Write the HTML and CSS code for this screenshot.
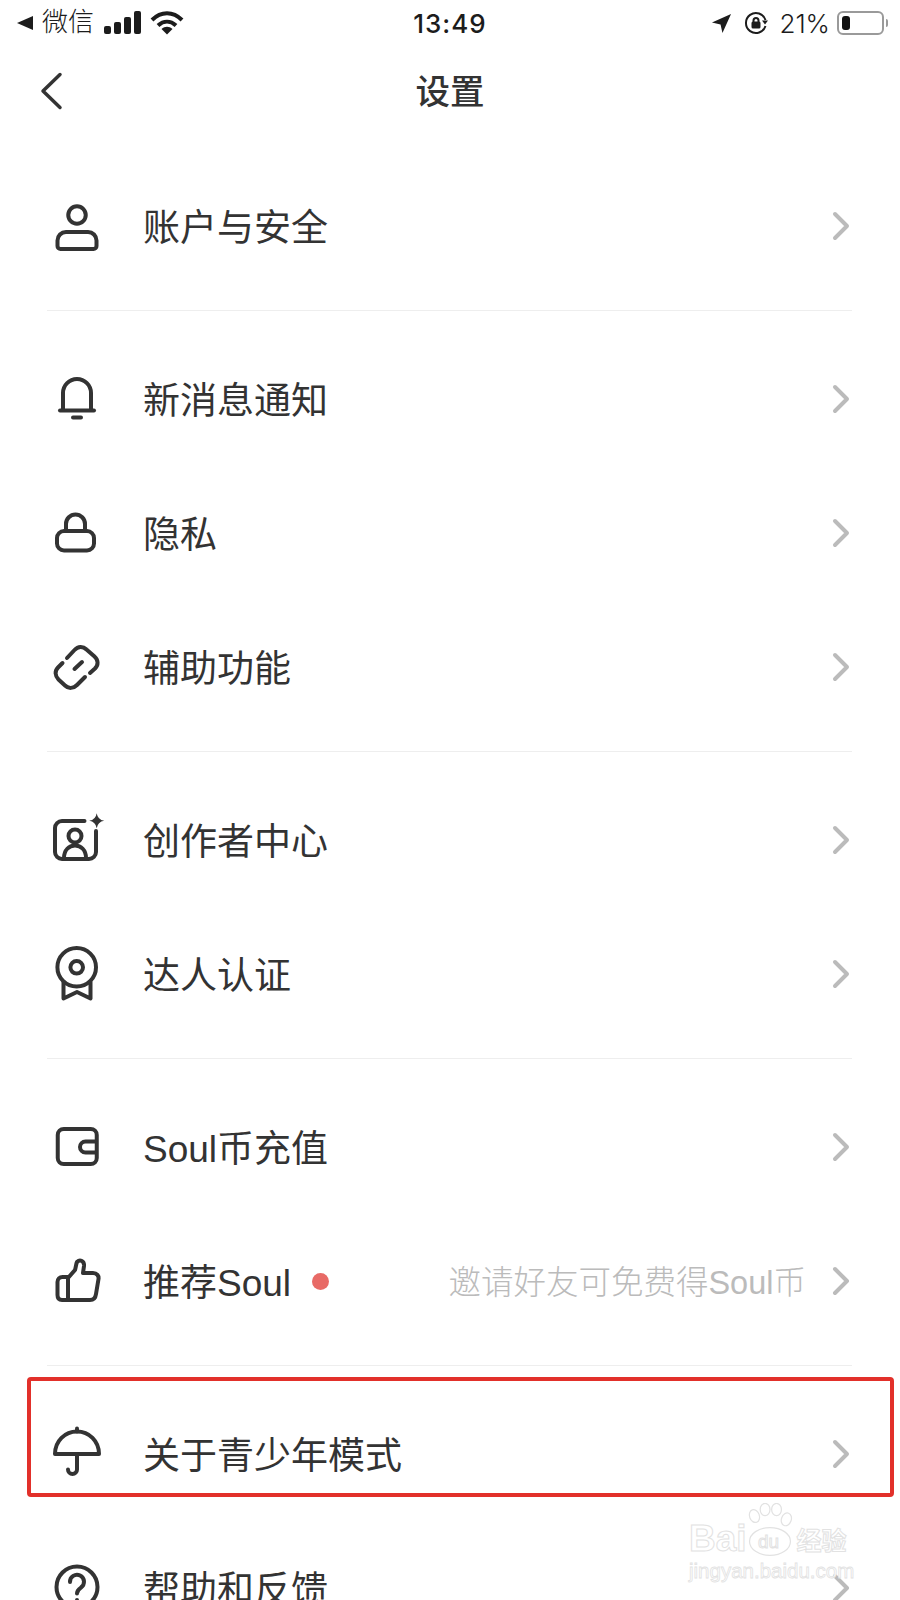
FILE: index.html
```html
<!DOCTYPE html>
<html lang="zh-CN">
<head>
  <meta charset="UTF-8">
  <meta name="viewport" content="width=device-width, initial-scale=1.0">
  <title>设置</title>
  <link rel="stylesheet" href="styles.css">
</head>
<body>
  <!-- Status bar -->
  <div class="status-bar">
    <div class="status-left">
      <svg class="status-back" viewBox="0 0 18 16"><path d="M1 8L17 1V15Z"/></svg>
      <span class="status-app">微信</span>
      <svg class="status-signal" viewBox="0 0 38 24">
        <rect x="0" y="15" width="7" height="8" rx="2"/>
        <rect x="10" y="11" width="7" height="12" rx="2"/>
        <rect x="20" y="6" width="7" height="17" rx="2"/>
        <rect x="30" y="0" width="7" height="23" rx="2"/>
      </svg>
      <svg class="status-wifi" viewBox="0 0 34 24">
        <path class="wifi-arc" d="M2 9C11 0 23 0 32 9"/>
        <path class="wifi-arc" d="M8 14.500C13.500 9.500 20.500 9.500 26 14.500"/>
        <path d="M11.500 18C15 15 19 15 22.500 18L17 23.500Z"/>
      </svg>
    </div>
    <div class="status-time">13:49</div>
    <div class="status-right">
      <svg class="status-arrow" viewBox="0 0 22 22"><path d="M21 1L1 10L10 12L12 21Z"/></svg>
      <svg class="status-lock" viewBox="0 0 24 24">
        <path class="lock-ring" d="M21.500 9A10 10 0 1 0 21.500 15"/>
        <path d="M18 9.500H24L21 13.500Z"/>
        <rect x="7.500" y="10.500" width="9" height="7" rx="1.500"/>
        <path class="lock-loop" d="M9.500 11V9.500a2.500 2.500 0 0 1 5 0V11"/>
      </svg>
      <span class="status-battery-text">21%</span>
      <div class="battery"><div class="battery-level"></div></div>
      <div class="battery-nub"></div>
    </div>
  </div>

  <!-- Nav -->
  <div class="nav">
    <svg class="nav-back" viewBox="0 0 24 38"><path d="M21 2.500L4 19L21 35.500"/></svg>
    <h1 class="nav-title">设置</h1>
  </div>

  <!-- Settings list -->
  <div class="group">
    <div class="row">
      <svg class="row-icon" viewBox="0 0 50 50">
        <circle cx="25" cy="14" r="8.750"/>
        <path d="M14 31H36a8.500 8.500 0 0 1 8.500 8.500V45a3 3 0 0 1-3 3H8.500a3 3 0 0 1-3-3V39.500A8.500 8.500 0 0 1 14 31Z"/>
      </svg>
      <span class="row-label">账户与安全</span>
      <svg class="row-arrow" viewBox="0 0 20 30"><path d="M4 3L16 15L4 27"/></svg>
    </div>
  </div>

  <div class="group">
    <div class="row">
      <svg class="row-icon" viewBox="0 0 50 50">
        <path d="M11 36V19a14 14 0 0 1 28 0V36"/>
        <path d="M8 36.500H42"/>
        <path d="M21 43.500H29"/>
      </svg>
      <span class="row-label">新消息通知</span>
      <svg class="row-arrow" viewBox="0 0 20 30"><path d="M4 3L16 15L4 27"/></svg>
    </div>
    <div class="row">
      <svg class="row-icon" viewBox="0 0 50 50">
        <path d="M14 23V16a9.500 9.500 0 0 1 19 0V23"/>
        <rect x="5" y="23" width="37" height="19.500" rx="7"/>
      </svg>
      <span class="row-label">隐私</span>
      <svg class="row-arrow" viewBox="0 0 20 30"><path d="M4 3L16 15L4 27"/></svg>
    </div>
    <div class="row">
      <svg class="row-icon" viewBox="0 0 50 50">
        <path d="M15 16L22.500 8C26 4 31 4 34.500 7.500L42.500 14.500C46.500 18 46.500 23 43 26.500L38 31"/>
        <path d="M10.500 21L6 25.500C2.500 29 3 34 6.500 37.500L13 43.500C16.500 47 21.500 46.500 25 43L33 35"/>
        <path d="M22.500 27L30 20"/>
      </svg>
      <span class="row-label">辅助功能</span>
      <svg class="row-arrow" viewBox="0 0 20 30"><path d="M4 3L16 15L4 27"/></svg>
    </div>
  </div>

  <div class="group">
    <div class="row">
      <svg class="row-icon" viewBox="0 0 50 50">
        <path d="M32.500 6H10a7 7 0 0 0-7 7V37a7 7 0 0 0 7 7H37a7 7 0 0 0 7-7V16"/>
        <circle cx="23" cy="21" r="6.500"/>
        <path d="M12 43C12 35 17 30.500 23 30.500S34 35 34 43"/>
        <path class="icon-fill" d="M44.700-1.800Q45.700 4.700 52.200 5.700Q45.700 6.700 44.700 13.200Q43.700 6.700 37.200 5.700Q43.700 4.700 44.700-1.800Z"/>
      </svg>
      <span class="row-label">创作者中心</span>
      <svg class="row-arrow" viewBox="0 0 20 30"><path d="M4 3L16 15L4 27"/></svg>
    </div>
    <div class="row">
      <svg class="row-icon" viewBox="0 0 50 50">
        <circle cx="24.700" cy="18.300" r="19.300"/>
        <circle cx="24.700" cy="18.300" r="6.300"/>
        <path d="M11.500 33V49.500L25 43L38.500 49.500V33"/>
      </svg>
      <span class="row-label">达人认证</span>
      <svg class="row-arrow" viewBox="0 0 20 30"><path d="M4 3L16 15L4 27"/></svg>
    </div>
  </div>

  <div class="group">
    <div class="row">
      <svg class="row-icon" viewBox="0 0 50 50">
        <rect x="5.750" y="7" width="39" height="35" rx="6"/>
        <path d="M44 19.500H33.500a5.500 5.500 0 0 0 0 11H44"/>
      </svg>
      <span class="row-label">Soul币充值</span>
      <svg class="row-arrow" viewBox="0 0 20 30"><path d="M4 3L16 15L4 27"/></svg>
    </div>
    <div class="row">
      <svg class="row-icon" viewBox="0 0 50 50">
        <path d="M16 22L23 14C24 11 24 8 25 6C28 3 32.500 5 32 10L31 17H41C45 17 47 20 46.500 23L44 38C43.500 42 41 44 38 44H10C7 44 5.500 42 5.500 39V26C5.500 23 7.500 21 10.500 21H16V44"/>
      </svg>
      <span class="row-label">推荐Soul</span>
      <span class="row-dot"></span>
      <span class="row-hint">邀请好友可免费得Soul币</span>
      <svg class="row-arrow" viewBox="0 0 20 30"><path d="M4 3L16 15L4 27"/></svg>
    </div>
  </div>

  <div class="group">
    <div class="row row-marked">
      <svg class="row-icon" viewBox="0 0 50 50">
        <path d="M3 25C3 12 13 2.500 25 2.500S47 12 47 25Z"/>
        <path d="M25 -0.500V2.500"/>
        <path d="M25 25V40.500a4.500 4.500 0 0 1-9 0"/>
      </svg>
      <span class="row-label">关于青少年模式</span>
      <svg class="row-arrow" viewBox="0 0 20 30"><path d="M4 3L16 15L4 27"/></svg>
    </div>
    <div class="row">
      <svg class="row-icon" viewBox="0 0 50 50">
        <circle cx="25" cy="24" r="20.500"/>
        <path d="M18 19a7 7 0 1 1 11 5.500c-2.500 1.700-4 2.700-4 6"/>
        <path d="M25 37V37.500"/>
      </svg>
      <span class="row-label">帮助和反馈</span>
      <svg class="row-arrow" viewBox="0 0 20 30"><path d="M4 3L16 15L4 27"/></svg>
    </div>
  </div>

  <!-- Watermark -->
  <div class="watermark">
    <div class="watermark-top">
      <span class="watermark-bai">Bai</span>
      <svg class="watermark-paw" viewBox="0 0 56 66">
        <ellipse cx="9" cy="16" rx="6" ry="8" transform="rotate(-20 9 16)"/>
        <ellipse cx="22" cy="8" rx="6" ry="7.500"/>
        <ellipse cx="36" cy="8" rx="6" ry="7.500"/>
        <ellipse cx="48" cy="20" rx="6" ry="8" transform="rotate(20 48 20)"/>
        <ellipse cx="28" cy="47" rx="25" ry="17"/>
      </svg>
      <span class="watermark-du">du</span>
      <span class="watermark-cn">经验</span>
    </div>
    <div class="watermark-url">jingyan.baidu.com</div>
  </div>
</body>
</html>
```

FILE: styles.css
```css
* {
  margin: 0;
  padding: 0;
  box-sizing: border-box;
}

body {
  position: relative;
  width: 900px;
  height: 1600px;
  overflow: hidden;
  background: #fff;
  color: #333;
  font-family: "Inter", "Noto Sans CJK SC", sans-serif;
}

/* Status bar */
.status-bar {
  display: flex;
  justify-content: space-between;
  align-items: center;
  height: 46px;
  padding: 0 12px 0 16px;
  color: #1c1c1c;
}

.status-left,
.status-right {
  display: flex;
  align-items: center;
  width: 330px;
}

.status-right {
  justify-content: flex-end;
}

.status-back {
  width: 18px;
  height: 16px;
  fill: #1c1c1c;
}

.status-app {
  margin-left: 8px;
  font-size: 26px;
  font-weight: 300;
  line-height: 36px;
  padding-bottom: 2px;
}

.status-signal {
  width: 38px;
  height: 24px;
  margin-left: 10px;
  fill: #1c1c1c;
}

.status-wifi {
  width: 34px;
  height: 24px;
  margin-left: 8px;
  fill: #1c1c1c;
}

.wifi-arc {
  fill: none;
  stroke: #1c1c1c;
  stroke-width: 4;
}

.status-time {
  font-size: 26px;
  font-weight: 500;
  letter-spacing: 1px;
  margin-right: 4px;
}

.status-arrow {
  width: 21px;
  height: 21px;
  fill: #1c1c1c;
}

.status-lock {
  width: 24px;
  height: 24px;
  margin-left: 12px;
  fill: #1c1c1c;
}

.lock-ring,
.lock-loop {
  fill: none;
  stroke: #1c1c1c;
  stroke-width: 2;
}

.status-battery-text {
  margin-left: 11px;
  font-size: 26px;
  font-weight: 300;
}

.battery {
  width: 47px;
  height: 24px;
  margin-left: 7px;
  padding: 3px;
  border: 2px solid #9a9a9a;
  border-radius: 6px;
}

.battery-level {
  width: 8px;
  height: 100%;
  background: #111;
  border-radius: 3px;
}

.battery-nub {
  width: 2px;
  height: 8px;
  margin-left: 2px;
  background: #9a9a9a;
  border-radius: 0 2px 2px 0;
}

/* Nav */
.nav {
  position: relative;
  display: flex;
  justify-content: center;
  align-items: center;
  height: 92px;
  padding-bottom: 6px;
}

.nav-back {
  position: absolute;
  left: 39px;
  top: 26px;
  width: 24px;
  height: 38px;
  fill: none;
  stroke: #333;
  stroke-width: 3.500;
  stroke-linecap: round;
  stroke-linejoin: round;
}

.nav-title {
  font-size: 34.500px;
  font-weight: 500;
  color: #333;
}

/* List */
.group {
  margin: 0 48px 0 47px;
  padding: 21px 0 17px;
  border-bottom: 1px solid #eee;
}

.group:last-of-type {
  border-bottom: none;
}

.row {
  display: flex;
  align-items: center;
  height: 134px;
  padding: 0 1px 0 5px;
}

.row-marked {
  position: relative;
}

/* red annotation box drawn over the row */
.row-marked::after {
  content: "";
  position: absolute;
  top: -10px;
  left: -20px;
  right: -42px;
  box-sizing: border-box;
  height: 120px;
  border: 4px solid #e2302a;
  border-radius: 4px;
}

.row-icon {
  flex: none;
  width: 50px;
  height: 50px;
  overflow: visible;
  fill: none;
  stroke: #333;
  stroke-width: 4;
  stroke-linecap: round;
  stroke-linejoin: round;
}

.row-icon .icon-fill {
  fill: #333;
  stroke: none;
}

.row-label {
  margin-left: 41px;
  padding-bottom: 3px;
  font-family: "Liberation Sans", "Noto Sans CJK SC", sans-serif;
  font-size: 37px;
  font-weight: 400;
  color: #333;
}

.row-dot {
  width: 17px;
  height: 17px;
  margin-left: 21px;
  background: #e86a66;
  border-radius: 50%;
}

.row-hint {
  margin-left: auto;
  margin-right: 25px;
  padding-bottom: 4px;
  font-family: "Liberation Sans", "Noto Sans CJK SC", sans-serif;
  font-size: 32.500px;
  font-weight: 300;
  color: #bbb;
}

.row-arrow {
  flex: none;
  width: 20px;
  height: 30px;
  margin-left: auto;
  fill: none;
  stroke: #bbb;
  stroke-width: 4;
  stroke-linecap: round;
  stroke-linejoin: round;
}

.row-hint + .row-arrow {
  margin-left: 0;
}

/* Watermark */
.watermark {
  position: absolute;
  left: 689px;
  top: 1503px;
  width: 164px;
  color: #fff;
  -webkit-text-stroke: 1px #e2e2e2;
}

.watermark-top {
  position: relative;
  display: flex;
  align-items: flex-end;
  height: 54px;
}

.watermark-bai {
  font-family: "Liberation Sans", sans-serif;
  font-size: 37px;
  font-weight: 700;
  line-height: 36px;
}

.watermark-paw {
  width: 48px;
  height: 54px;
  margin-left: -1px;
  fill: #fff;
  stroke: #e2e2e2;
  stroke-width: 1.500;
}

.watermark-du {
  position: absolute;
  left: 69px;
  bottom: 4px;
  font-family: "Liberation Sans", sans-serif;
  font-size: 19px;
  line-height: 22px;
}

.watermark-cn {
  margin-left: 3px;
  font-size: 25px;
  line-height: 32px;
  font-weight: 700;
}

.watermark-url {
  margin-top: 1px;
  font-family: "Liberation Sans", sans-serif;
  font-size: 20.500px;
  line-height: 26px;
  white-space: nowrap;
  -webkit-text-stroke: 0.800px #e2e2e2;
}
```
